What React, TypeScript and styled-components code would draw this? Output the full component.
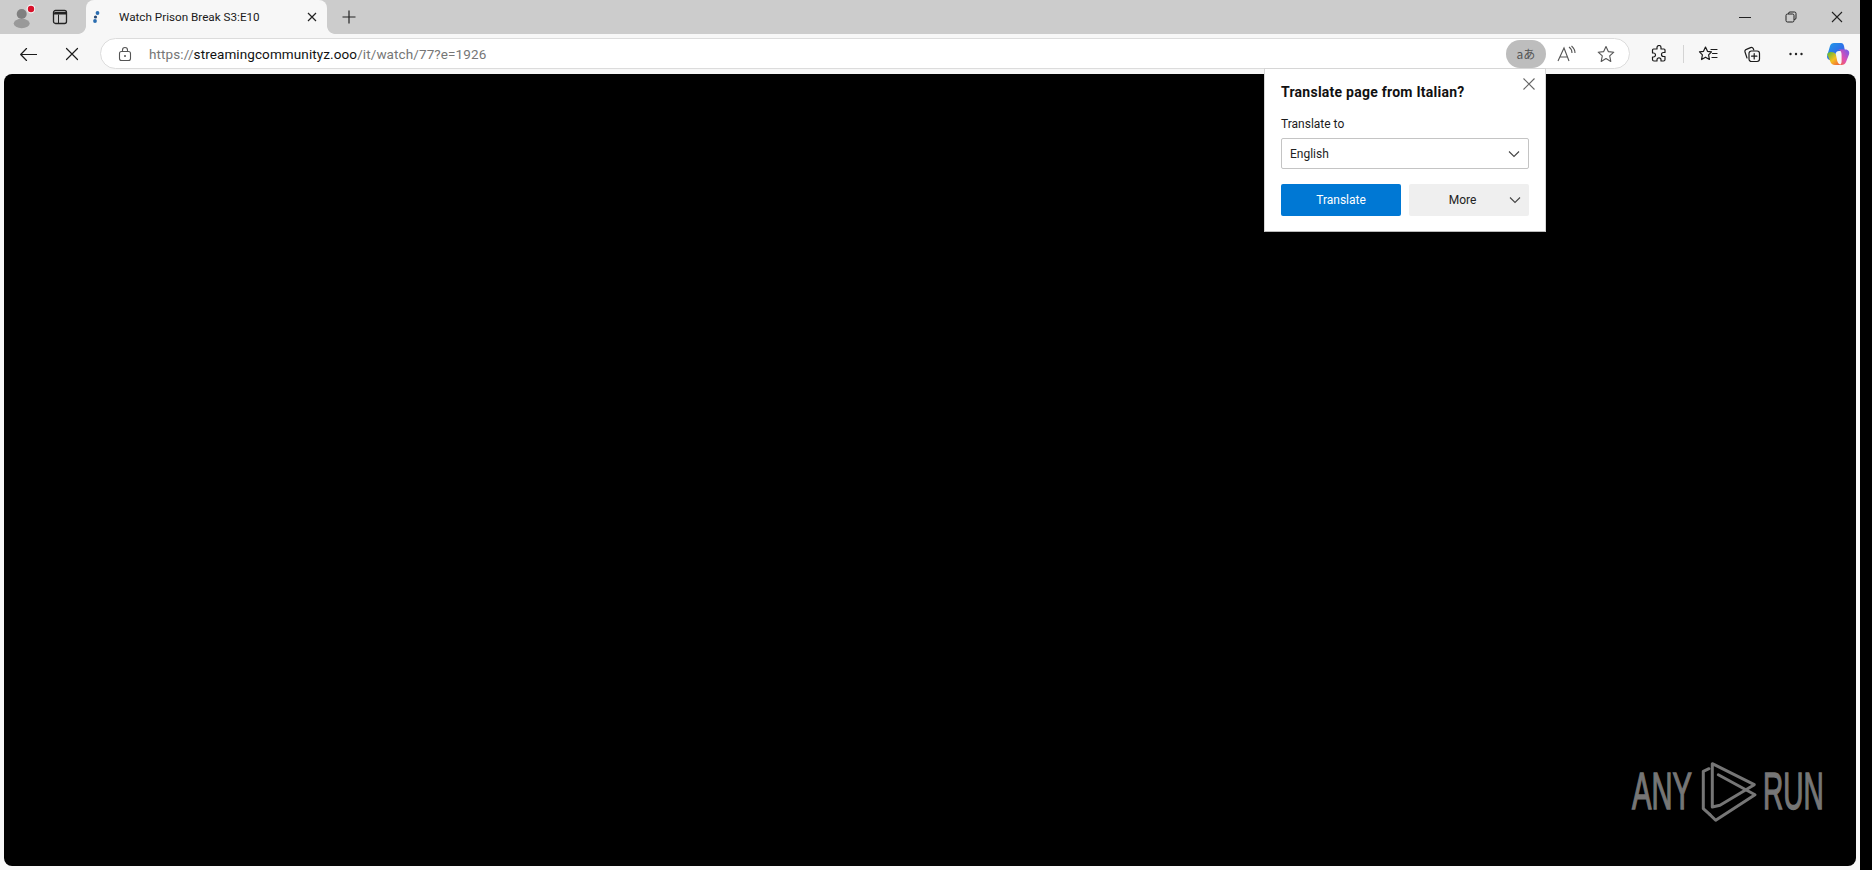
import React from "react";
import styled, { createGlobalStyle } from "styled-components";

const Global = createGlobalStyle`
  html, body { margin: 0; padding: 0; height: 100%; background: #000; overflow: hidden; }
  #root { height: 100%; }
  * { box-sizing: border-box; }
`;

const FONT = `Roboto, "Open Sans", "Liberation Sans", sans-serif`;

const Screen = styled.div`
  width: 1872px;
  height: 870px;
  background: #000;
  font-family: ${FONT};
`;

const Browser = styled.div`
  position: relative;
  width: 1860px;
  height: 870px;
  background: #f7f7f7;
  display: flex;
  flex-direction: column;
`;

const TabStrip = styled.div`
  height: 34px;
  background: #cccccc;
  display: flex;
  align-items: center;
  flex: none;
`;

const StripIcon = styled.div<{ $w: number; $ml?: number }>`
  width: ${(p) => p.$w}px;
  margin-left: ${(p) => p.$ml ?? 0}px;
  height: 34px;
  flex: none;
  display: flex;
  align-items: center;
  justify-content: center;
`;

const Tab = styled.div`
  position: relative;
  width: 241px;
  height: 34px;
  margin-left: 15px;
  padding: 0 9px 0 4px;
  background: #f7f7f7;
  border-radius: 8px 8px 0 0;
  display: flex;
  align-items: center;
  flex: none;
  &::before, &::after {
    content: "";
    position: absolute;
    bottom: 0;
    width: 8px;
    height: 8px;
    background: radial-gradient(circle at var(--cx) 0, #cccccc 7.5px, #f7f7f7 8.2px);
  }
  &::before { left: -8px; --cx: 0; }
  &::after { right: -8px; --cx: 100%; }
`;

const TabTitle = styled.span`
  flex: 1;
  margin-left: 17px;
  font-size: 11.7px;
  color: #1a1a1a;
  white-space: nowrap;
`;

const WindowControls = styled.div`
  margin-left: auto;
  display: flex;
  align-items: center;
  height: 34px;
`;

const WindowButton = styled.div`
  width: 46px;
  height: 34px;
  display: flex;
  align-items: center;
  justify-content: center;
`;

const Toolbar = styled.div`
  height: 40px;
  flex: none;
  display: flex;
  align-items: center;
  padding-left: 10px;
`;

const NavButton = styled.div<{ $ml?: number }>`
  width: 36px;
  height: 32px;
  margin-left: ${(p) => p.$ml ?? 0}px;
  flex: none;
  display: flex;
  align-items: center;
  justify-content: center;
`;

const AddressBar = styled.div`
  width: 1530px;
  height: 31px;
  margin: 0 0 1px 10px;
  flex: none;
  background: #fff;
  border: 1px solid #dcdcdc;
  border-radius: 16px;
  display: flex;
  align-items: center;
  padding: 0 4px 0 17px;
`;

const Url = styled.div`
  margin-left: 17px;
  font-size: 13.5px;
  color: #767676;
  white-space: nowrap;
  flex: 1;
  letter-spacing: 0.1px;
`;

const Host = styled.span`
  color: #111;
`;

const TranslatePill = styled.div`
  width: 40px;
  height: 28px;
  border-radius: 14px;
  background: #bdbdbd;
  display: flex;
  align-items: center;
  justify-content: center;
  font-size: 12px;
  color: #555;
  font-family: "Noto Sans CJK JP", ${FONT};
  flex: none;
`;

const BarIcon = styled.div<{ $w: number }>`
  width: ${(p) => p.$w}px;
  height: 29px;
  flex: none;
  display: flex;
  align-items: center;
  justify-content: center;
`;

const Tools = styled.div`
  display: flex;
  align-items: center;
  gap: 8px;
  padding-left: 11px;
  flex: none;
`;

const ToolButton = styled.div<{ $w: number }>`
  width: ${(p) => p.$w}px;
  height: 32px;
  flex: none;
  display: flex;
  align-items: center;
  justify-content: center;
`;

const Divider = styled.div`
  width: 1px;
  height: 18px;
  margin: 0 -2px;
  background: #d4d4d4;
  flex: none;
`;

const Viewport = styled.div`
  position: relative;
  flex: 1;
  margin: 0 4px 4px 4px;
  background: #000;
  border-radius: 8px;
`;

const Popup = styled.div`
  position: absolute;
  left: 1264px;
  top: 68px;
  width: 282px;
  height: 164px;
  background: #fff;
  border: 1px solid #d6d6d6;
  border-bottom-color: #bbb;
  padding: 14px 16px;
  z-index: 3;
  display: flex;
  flex-direction: column;
`;

const PopupTitle = styled.div`
  font-size: 14px;
  font-weight: 700;
  color: #111;
  line-height: 18px;
  white-space: nowrap;
  letter-spacing: 0.25px;
`;

const PopupClose = styled.div`
  position: absolute;
  right: 9px;
  top: 8px;
  width: 14px;
  height: 14px;
  display: flex;
`;

const FieldLabel = styled.div`
  margin-top: 15px;
  font-size: 12px;
  color: #1c1c1c;
  line-height: 16px;
`;

const Select = styled.div`
  margin-top: 6px;
  height: 31px;
  border: 1px solid #c4c4c4;
  border-radius: 2px;
  padding: 0 8px;
  display: flex;
  align-items: center;
  justify-content: space-between;
  font-size: 12px;
  color: #222;
`;

const Actions = styled.div`
  margin-top: 15px;
  display: flex;
  gap: 8px;
`;

const PrimaryButton = styled.div`
  width: 120px;
  height: 32px;
  border-radius: 2px;
  background: #0078d4;
  color: #fff;
  font-size: 12px;
  display: flex;
  align-items: center;
  justify-content: center;
`;

const SecondaryButton = styled.div`
  position: relative;
  width: 120px;
  height: 32px;
  border-radius: 2px;
  background: #efefef;
  color: #222;
  font-size: 12px;
  display: flex;
  align-items: center;
  justify-content: center;
  padding-right: 13px;
`;

const MoreChevron = styled.span`
  position: absolute;
  right: 8px;
  top: 10px;
  display: flex;
`;

const Watermark = styled.svg`
  position: absolute;
  left: 1626px;
  top: 682px;
`;

const Ink = { fill: "none", stroke: "#1c1c1c", strokeWidth: 1.2, strokeLinecap: "round", strokeLinejoin: "round" } as const;

const Chevron = () => (
  <svg width="12" height="12" viewBox="0 0 12 12">
    <path d="M1 3.5 L6 8.5 L11 3.5" fill="none" stroke="#444" strokeWidth="1.1" />
  </svg>
);

export default function App() {
  return (
    <Screen>
      <Global />
      <Browser>
        <TabStrip>
          <StripIcon $w={28} $ml={8}>
            <svg width="26" height="28" viewBox="0 0 26 28">
              <circle cx="12.7" cy="11" r="5" fill="#808080" />
              <ellipse cx="12.7" cy="20.5" rx="8" ry="4.7" fill="#999" />
              <circle cx="22" cy="6" r="4.4" fill="#f4f4f4" />
              <circle cx="22" cy="6" r="3.2" fill="#d8112a" />
            </svg>
          </StripIcon>
          <StripIcon $w={22} $ml={13}>
            <svg width="16" height="16" viewBox="0 0 16 16">
              <rect x="1.5" y="1.5" width="13" height="13" rx="2" fill="none" stroke="#222" strokeWidth="1.3" />
              <path d="M1.5 5.5 H14.5 V3 H2.5 Z" fill="#222" />
              <path d="M6.5 5.5 V14" stroke="#222" strokeWidth="1" />
            </svg>
          </StripIcon>
          <Tab>
            <svg width="12" height="16" viewBox="0 0 12 16">
              <circle cx="7.5" cy="4" r="1.9" fill="#2a6db0" />
              <circle cx="5.5" cy="8" r="1.6" fill="#284a75" />
              <circle cx="5" cy="12" r="1.9" fill="#2a6db0" />
            </svg>
            <TabTitle>Watch Prison Break S3:E10</TabTitle>
            <svg width="12" height="12" viewBox="0 0 12 12">
              <path d="M2 2 L10 10 M10 2 L2 10" stroke="#222" strokeWidth="1.2" />
            </svg>
          </Tab>
          <StripIcon $w={30} $ml={7}>
            <svg width="16" height="16" viewBox="0 0 16 16">
              <path d="M8 1.5 V14.5 M1.5 8 H14.5" stroke="#222" strokeWidth="1.2" />
            </svg>
          </StripIcon>
          <WindowControls>
            <WindowButton>
              <svg width="14" height="14" viewBox="0 0 14 14"><path d="M1 7.5 H13" stroke="#222" strokeWidth="1" /></svg>
            </WindowButton>
            <WindowButton>
              <svg width="14" height="14" viewBox="0 0 14 14">
                <rect x="2" y="4" width="8" height="8" rx="1.5" fill="none" stroke="#222" strokeWidth="1" />
                <path d="M4.5 4 V3.5 A1.5 1.5 0 0 1 6 2 H10.5 A1.5 1.5 0 0 1 12 3.5 V8 A1.5 1.5 0 0 1 10.5 9.5 H10" fill="none" stroke="#222" strokeWidth="1" />
              </svg>
            </WindowButton>
            <WindowButton>
              <svg width="14" height="14" viewBox="0 0 14 14"><path d="M2 2 L12 12 M12 2 L2 12" stroke="#222" strokeWidth="1.1" /></svg>
            </WindowButton>
          </WindowControls>
        </TabStrip>
        <Toolbar>
          <NavButton>
            <svg width="17" height="13" viewBox="0 0 17 13">
              <path d="M6.5 0.5 L0.7 6.5 L6.5 12.5 M0.7 6.5 H16.5" {...Ink} />
            </svg>
          </NavButton>
          <NavButton $ml={8}>
            <svg width="14" height="14" viewBox="0 0 14 14"><path d="M1.5 1.5 L12.5 12.5 M12.5 1.5 L1.5 12.5" {...Ink} /></svg>
          </NavButton>
          <AddressBar>
            <svg width="14" height="16" viewBox="0 0 14 16">
              <rect x="1.5" y="5.5" width="11" height="9" rx="2" fill="none" stroke="#555" strokeWidth="1.1" />
              <path d="M4.5 5.5 V4 A2.5 2.5 0 0 1 9.5 4 V5.5" fill="none" stroke="#555" strokeWidth="1.1" />
              <circle cx="7" cy="10" r="1" fill="#555" />
            </svg>
            <Url>https://<Host>streamingcommunityz.ooo</Host>/it/watch/77?e=1926</Url>
            <TranslatePill>aあ</TranslatePill>
            <BarIcon $w={41}>
              <svg width="20" height="18" viewBox="0 0 20 18">
                <path d="M1 16 L7 3 L12 16 M3 12 H10.5" fill="none" stroke="#555" strokeWidth="1.1" />
                <path d="M12 2 Q15 4 15 8 M14.5 1 Q18 4 18 8" fill="none" stroke="#555" strokeWidth="1.1" />
              </svg>
            </BarIcon>
            <BarIcon $w={38}>
              <svg width="18" height="18" viewBox="0 0 18 18">
                <path d="M9 1.5 L11.3 6.6 L16.8 7.2 L12.7 10.9 L13.8 16.4 L9 13.6 L4.2 16.4 L5.3 10.9 L1.2 7.2 L6.7 6.6 Z" fill="none" stroke="#555" strokeWidth="1.1" strokeLinejoin="round" />
              </svg>
            </BarIcon>
          </AddressBar>
          <Tools>
            <ToolButton $w={36}>
              <svg width="18" height="18" viewBox="0 0 18 18">
                <path d="M7 2.5 A2 2 0 0 1 11 2.5 L11 4 H14 A1 1 0 0 1 15 5 V7.5 H13.5 A2 2 0 0 0 13.5 11.5 H15 V14.5 A1.5 1.5 0 0 1 13.5 16 H11 V14.8 A2 2 0 0 0 7 14.8 V16 H4 A1.5 1.5 0 0 1 2.5 14.5 V12 H3.5 A2 2 0 0 0 3.5 8 H2.5 V5 A1 1 0 0 1 3.5 4 H7 Z" {...Ink} />
              </svg>
            </ToolButton>
            <Divider />
            <ToolButton $w={36}>
              <svg width="20" height="18" viewBox="0 0 20 18">
                <path d="M7.5 2 L9.5 6.3 L13.5 6.8 L10.6 9.8 L11.4 14.5 L7.5 12.2 L3.6 14.5 L4.4 9.8 L1.5 6.8 L5.5 6.3 Z" {...Ink} />
                <path d="M13 4.5 H19 M14.5 8.5 H19 M14 12.5 H19" {...Ink} />
              </svg>
            </ToolButton>
            <ToolButton $w={36}>
              <svg width="18" height="18" viewBox="0 0 18 18">
                <path d="M4 13 L2 7 A2 2 0 0 1 3.4 4.4 L7.6 2.6 A2 2 0 0 1 10.2 3.6 L10.8 5" {...Ink} />
                <rect x="6" y="6" width="10.5" height="10.5" rx="2.4" {...Ink} />
                <path d="M11.2 8.6 V13.9 M8.6 11.2 H13.9" {...Ink} />
              </svg>
            </ToolButton>
            <ToolButton $w={36}>
              <svg width="16" height="4" viewBox="0 0 16 4">
                <circle cx="2.5" cy="2" r="1.2" fill="#222" />
                <circle cx="8" cy="2" r="1.2" fill="#222" />
                <circle cx="13.5" cy="2" r="1.2" fill="#222" />
              </svg>
            </ToolButton>
            <ToolButton $w={32}>
              <svg width="24" height="24" viewBox="0 0 24 24">
                <defs>
                  <linearGradient id="cpA" x1="0" y1="0" x2="1" y2="1">
                    <stop offset="0" stopColor="#1f9ee8" />
                    <stop offset="0.55" stopColor="#2f6fe8" />
                    <stop offset="1" stopColor="#7a4de0" />
                  </linearGradient>
                  <linearGradient id="cpB" x1="0" y1="0" x2="1" y2="1">
                    <stop offset="0" stopColor="#4fb83a" />
                    <stop offset="0.5" stopColor="#f5c020" />
                    <stop offset="1" stopColor="#ef4a3c" />
                  </linearGradient>
                  <linearGradient id="cpC" x1="1" y1="0" x2="0" y2="1">
                    <stop offset="0" stopColor="#6a5cf0" />
                    <stop offset="0.55" stopColor="#e04fb0" />
                    <stop offset="1" stopColor="#f4692b" />
                  </linearGradient>
                </defs>
                <path d="M8 1 H15 C17 1 17.7 2.5 18 4 L19 9 H13 C11 9 10 10 9.5 12 L8 18 H5 C2 18 0.5 16 1.2 13.5 L4 4 C4.6 2.2 6 1 8 1 Z" fill="url(#cpA)" />
                <path d="M5 10 C8 10 9.4 11 10 13 L11 18 C11.5 20.5 13 23 16 23 H9 C6.4 23 5 21.5 4.3 19.5 L1.4 13 C0.8 11.4 3 10 5 10 Z" fill="url(#cpB)" />
                <path d="M12 7.5 H19.5 C22.5 7.5 23.8 10 23 12.5 L20 20 C19.3 22 17.6 23 15.5 23 H13 C15 23 15.6 21 15.6 19 L15.6 14 C15.8 11 15 8 12 7.5 Z" fill="url(#cpC)" />
              </svg>
            </ToolButton>
          </Tools>
        </Toolbar>
        <Viewport>
          <Watermark width="200" height="80" viewBox="0 0 200 80">
            <g fill="#767676" stroke="#767676" strokeWidth="1.4" fontFamily="'Liberation Sans', sans-serif" fontSize="51">
              <text transform="translate(2 53) scale(0.571 1)">ANY</text>
              <text transform="translate(133 53) scale(0.55 1)">RUN</text>
            </g>
            <g fill="none" stroke="#767676" strokeWidth="3" strokeLinejoin="round" strokeLinecap="round">
              <path d="M79 12.7 L73.3 15.3 L73.3 52.7 L80 58.7" />
              <path d="M82.3 51 L82.3 7.7 L124.3 28.7 L90 49.3 L82.3 51" />
              <path d="M88.3 18.7 L125 38.7 L85.7 64.3 L80 58.7" />
            </g>
          </Watermark>
        </Viewport>
        <Popup>
          <PopupTitle>Translate page from Italian?</PopupTitle>
          <PopupClose>
            <svg width="14" height="14" viewBox="0 0 14 14">
              <path d="M1.5 1.5 L12.5 12.5 M12.5 1.5 L1.5 12.5" stroke="#666" strokeWidth="1.1" />
            </svg>
          </PopupClose>
          <FieldLabel>Translate to</FieldLabel>
          <Select>
            English
            <Chevron />
          </Select>
          <Actions>
            <PrimaryButton>Translate</PrimaryButton>
            <SecondaryButton>
              More
              <MoreChevron><Chevron /></MoreChevron>
            </SecondaryButton>
          </Actions>
        </Popup>
      </Browser>
    </Screen>
  );
}
